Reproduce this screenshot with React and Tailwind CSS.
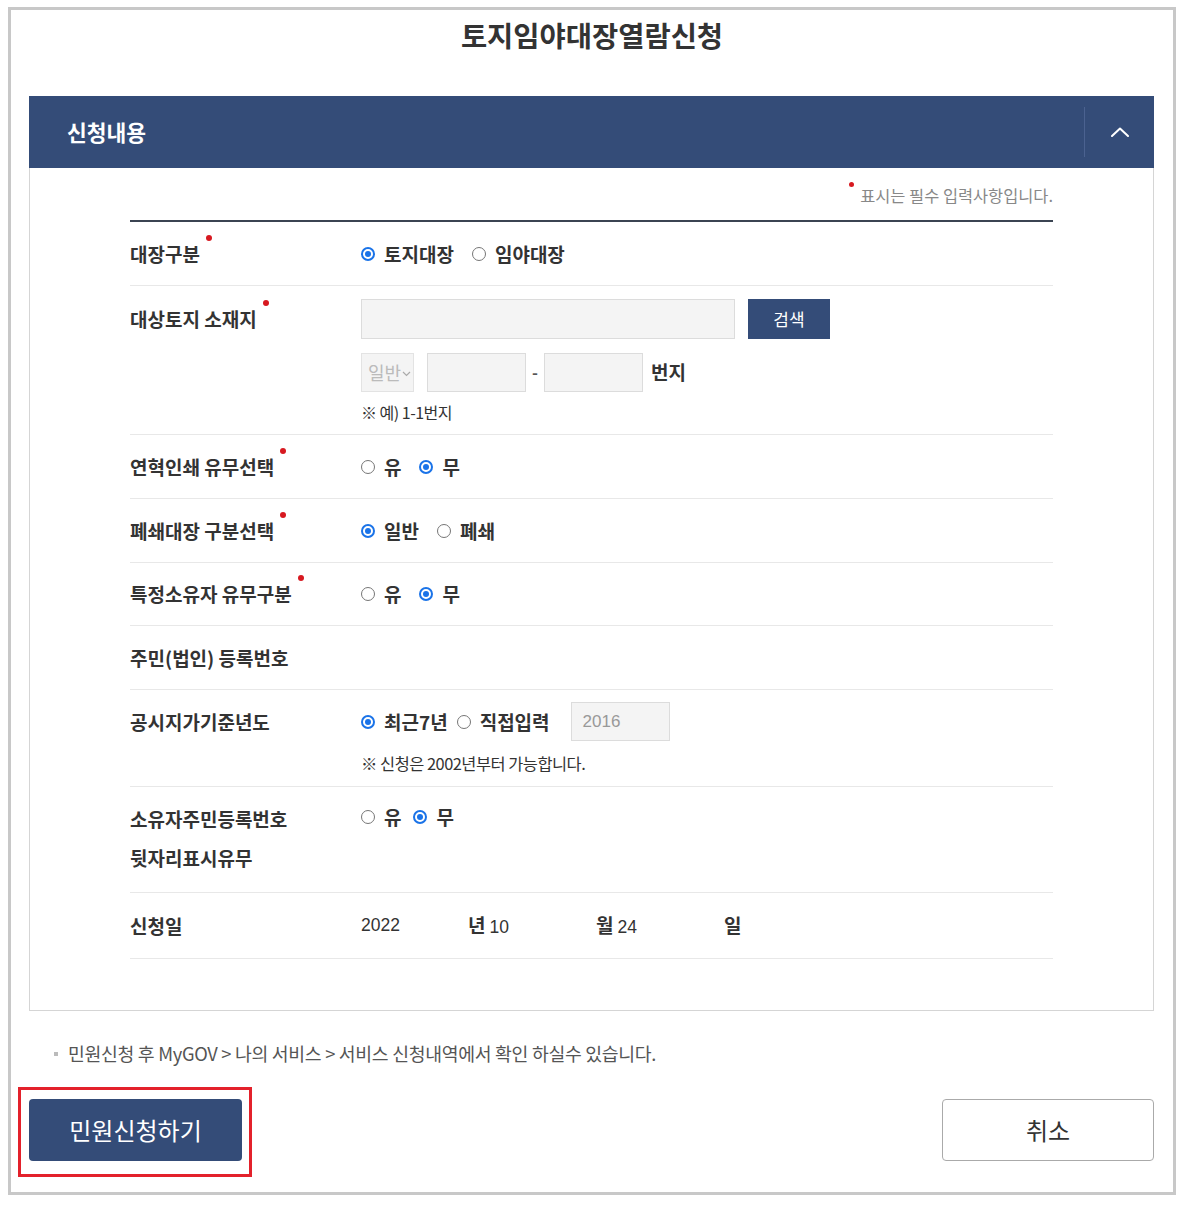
import React from "react";

function Radio({ checked }) {
  return checked ? (
    <span className="w-[14px] h-[14px] rounded-full border-[2px] border-[#1a73e8] bg-white flex items-center justify-center shrink-0">
      <span className="w-[6px] h-[6px] rounded-full bg-[#1a73e8]" />
    </span>
  ) : (
    <span className="w-[14px] h-[14px] rounded-full border border-[#767676] bg-white shrink-0" />
  );
}

function Opt({ checked, children, className = "" }) {
  return (
    <span className={"flex items-center " + className}>
      <Radio checked={checked} />
      <span className="ml-[9px] font-bold text-[19px] leading-[24px] text-[#333]">{children}</span>
    </span>
  );
}

function Label({ children, req, h = "h-[39px]" }) {
  return (
    <div className={"w-[231px] shrink-0 flex items-center font-bold text-[19px] text-[#333] " + h}>
      <span className="relative leading-[24px]">
        {children}
        {req && (
          <span className="absolute -right-[12px] -top-[7px] w-[6px] h-[6px] rounded-full bg-[#d71920]" />
        )}
      </span>
    </div>
  );
}

export default function App() {
  return (
    <div className="bg-white min-h-[1210px] pt-[7px] pl-[8px] font-['Noto_Sans_CJK_KR','Noto_Sans',sans-serif] text-[#333]">
      <div className="w-[1168px] h-[1188px] border-[3px] border-[#c8c8c8]">
        <h1 className="mt-[7px] text-center text-[28.5px] leading-[36px] font-bold text-[#333]">
          토지임야대장열람신청
        </h1>

        <div className="ml-[18px] w-[1125px]">
          {/* header */}
          <div className="mt-[43px] h-[72px] bg-[#344c78] flex items-center">
            <div className="flex-1 pl-[38px] text-white font-bold text-[21.5px]">신청내용</div>
            <div className="w-px h-[50px] bg-[#4b6290]" />
            <div className="w-[69px] flex items-center justify-center">
              <svg width="18" height="10" viewBox="0 0 18 10" fill="none">
                <polyline points="1,9 9,1.5 17,9" stroke="white" strokeWidth="2" strokeLinecap="round" strokeLinejoin="round" />
              </svg>
            </div>
          </div>

          {/* content box */}
          <div className="border-x border-b border-[#d5d5d5] pt-[17px] pb-[51px] px-[100px]">
            <div className="h-[20px] flex justify-end items-center text-[16.4px] text-[#888]">
              <span className="relative">
                <span className="absolute -left-[11px] -top-[1px] w-[5px] h-[5px] rounded-full bg-[#d71920]" />
                표시는 필수 입력사항입니다.
              </span>
            </div>
            <div className="mt-[15px] h-[2px] bg-[#3b4452]" />

            {/* row 1 */}
            <div className="flex py-[12px] border-b border-[#e8e8e8]">
              <Label req>대장구분</Label>
              <div className="flex items-center h-[39px]">
                <Opt checked>토지대장</Opt>
                <Opt className="ml-[18px]">임야대장</Opt>
              </div>
            </div>

            {/* row 2 */}
            <div className="flex pt-[13px] pb-[12px] border-b border-[#e8e8e8]">
              <Label req h="h-[40px]">대상토지 소재지</Label>
              <div className="flex flex-col">
                <div className="flex items-center">
                  <div className="w-[374px] h-[40px] bg-[#f4f4f4] border border-[#dcdcdc]" />
                  <button className="ml-[13px] w-[82px] h-[40px] bg-[#344c78] text-white text-[17px]">검색</button>
                </div>
                <div className="flex items-center mt-[13px] h-[40px]">
                  <div className="w-[53px] h-[39px] bg-[#f4f4f4] border border-[#e3e3e3] flex items-center pl-[6px] text-[18px] text-[#bbb]">
                    일반
                    <svg width="9" height="6" viewBox="0 0 9 6" className="ml-[1px] mt-[3px]" fill="none">
                      <polyline points="1,1 4.5,4.5 8,1" stroke="#aaa" strokeWidth="1.2" />
                    </svg>
                  </div>
                  <div className="ml-[13px] w-[99px] h-[39px] bg-[#f4f4f4] border border-[#dcdcdc]" />
                  <span className="w-[18px] text-center text-[16px] font-bold text-[#555]">-</span>
                  <div className="w-[99px] h-[39px] bg-[#f4f4f4] border border-[#dcdcdc]" />
                  <span className="ml-[8px] font-bold text-[19px] text-[#333]">번지</span>
                </div>
                <div className="mt-[10px] h-[20px] leading-[20px] text-[16px] text-[#333] tracking-[-0.5px]">※ 예) 1-1번지</div>
              </div>
            </div>

            {/* row 3 */}
            <div className="flex py-[12px] border-b border-[#e8e8e8]">
              <Label req>연혁인쇄 유무선택</Label>
              <div className="flex items-center h-[39px]">
                <Opt>유</Opt>
                <Opt checked className="ml-[18px]">무</Opt>
              </div>
            </div>

            {/* row 4 */}
            <div className="flex py-[12px] border-b border-[#e8e8e8]">
              <Label req>폐쇄대장 구분선택</Label>
              <div className="flex items-center h-[39px]">
                <Opt checked>일반</Opt>
                <Opt className="ml-[18px]">폐쇄</Opt>
              </div>
            </div>

            {/* row 5 */}
            <div className="flex py-[12px] border-b border-[#e8e8e8]">
              <Label req h="h-[38px]">특정소유자 유무구분</Label>
              <div className="flex items-center h-[38px]">
                <Opt>유</Opt>
                <Opt checked className="ml-[18px]">무</Opt>
              </div>
            </div>

            {/* row 6 */}
            <div className="flex py-[12px] border-b border-[#e8e8e8]">
              <Label>주민(법인) 등록번호</Label>
              <div className="h-[39px]" />
            </div>

            {/* row 7 */}
            <div className="flex pt-[12px] pb-[13px] border-b border-[#e8e8e8]">
              <Label>공시지가기준년도</Label>
              <div className="flex flex-col">
                <div className="flex items-center h-[39px]">
                  <Opt checked>최근7년</Opt>
                  <Opt className="ml-[9px]">직접입력</Opt>
                  <div className="ml-[21px] w-[99px] h-[39px] bg-[#f4f4f4] border border-[#dcdcdc] flex items-center pl-[11px] font-['Liberation_Sans',sans-serif] text-[17px] text-[#999]">
                    2016
                  </div>
                </div>
                <div className="mt-[12px] h-[20px] leading-[20px] text-[16.4px] text-[#333] tracking-[-0.5px]">※ 신청은 2002년부터 가능합니다.</div>
              </div>
            </div>

            {/* row 8 */}
            <div className="flex pt-[12px] pb-[15px] border-b border-[#e8e8e8]">
              <div className="w-[231px] shrink-0 font-bold text-[19px] text-[#333] leading-[39px]">
                <div>소유자주민등록번호</div>
                <div>뒷자리표시유무</div>
              </div>
              <div className="flex items-center h-[36px]">
                <Opt>유</Opt>
                <Opt checked className="ml-[12px]">무</Opt>
              </div>
            </div>

            {/* row 9 */}
            <div className="flex py-[13px] border-b border-[#e8e8e8]">
              <Label>신청일</Label>
              <div className="flex items-center h-[39px] text-[17.5px] text-[#333]">
                <span className="w-[107px] font-['Liberation_Sans',sans-serif]">2022</span>
                <span className="w-[128px]">
                  <span className="font-bold text-[19px]">년</span>
                  <span className="ml-[4px] font-['Liberation_Sans',sans-serif]">10</span>
                </span>
                <span className="w-[128px]">
                  <span className="font-bold text-[19px]">월</span>
                  <span className="ml-[4px] font-['Liberation_Sans',sans-serif]">24</span>
                </span>
                <span className="font-bold text-[19px]">일</span>
              </div>
            </div>
          </div>

          {/* note */}
          <div className="mt-[31px] h-[24px] flex items-center pl-[25px] text-[18.3px] text-[#555] tracking-[-0.3px]">
            <span className="w-[4px] h-[4px] bg-[#bbb] mr-[10px]" />
            민원신청 후 MyGOV &gt; 나의 서비스 &gt; 서비스 신청내역에서 확인 하실수 있습니다.
          </div>

          {/* buttons */}
          <div className="mt-[33px] flex justify-between">
            <div className="relative">
              <button className="w-[213px] h-[62px] rounded-[4px] bg-[#344c78] text-white text-[24px]">민원신청하기</button>
              <div className="absolute -left-[11px] -top-[12px] -right-[10px] -bottom-[16px] border-[3px] border-[#e3212b] pointer-events-none" />
            </div>
            <button className="w-[212px] h-[62px] rounded-[4px] bg-white border border-[#aaa] text-[24px] text-[#333]">취소</button>
          </div>
        </div>
      </div>
    </div>
  );
}
